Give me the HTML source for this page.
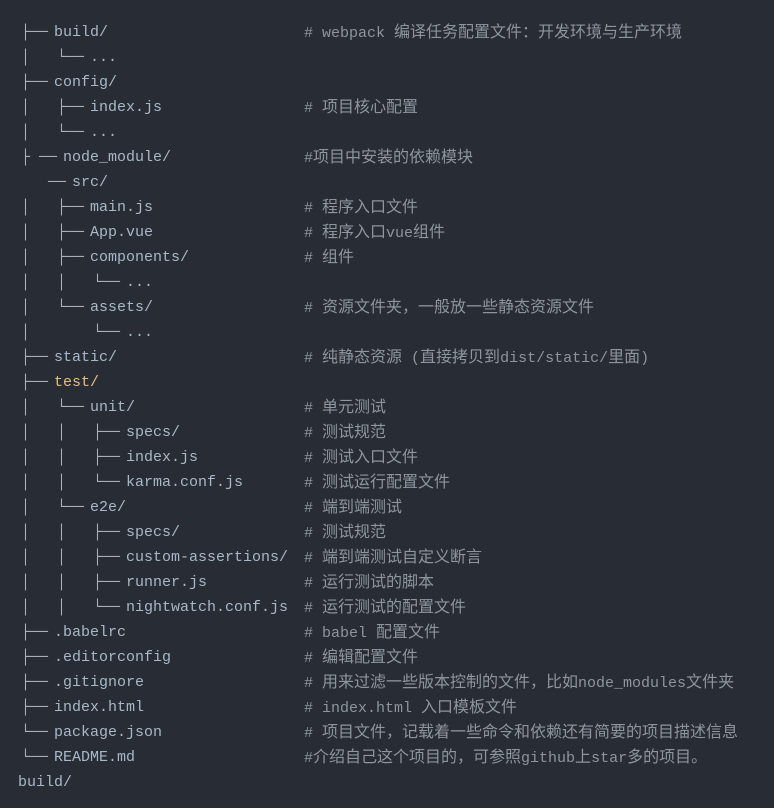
<!DOCTYPE html>
<html><head><meta charset="utf-8"><style>
body{margin:0;width:774px;height:808px;background:#282c34;overflow:hidden;font-family:"Liberation Mono","Noto Sans CJK SC",monospace;font-size:15px;}
.l{position:absolute;white-space:pre;line-height:20px;}
.t{color:#aab1bd;}
.n{color:#a8b8c8;}
.c{color:#8e959f;}
.y{color:#e5c07b;}
.k{font-size:16px;}
</style></head><body>
<div id="w"></div>
<script>
var L=[
["├──",54,"build/","# webpack 编译任务配置文件：开发环境与生产环境"],
["│   └──",90,"...",""],
["├──",54,"config/",""],
["│   ├──",90,"index.js","# 项目核心配置"],
["│   └──",90,"...",""],
["├ ──",63,"node_module/","#项目中安装的依赖模块"],
["   ──",72,"src/",""],
["│   ├──",90,"main.js","# 程序入口文件"],
["│   ├──",90,"App.vue","# 程序入口vue组件"],
["│   ├──",90,"components/","# 组件"],
["│   │   └──",126,"...",""],
["│   └──",90,"assets/","# 资源文件夹，一般放一些静态资源文件"],
["│       └──",126,"...",""],
["├──",54,"static/","# 纯静态资源 (直接拷贝到dist/static/里面)"],
["├──",54,"test/","",1],
["│   └──",90,"unit/","# 单元测试"],
["│   │   ├──",126,"specs/","# 测试规范"],
["│   │   ├──",126,"index.js","# 测试入口文件"],
["│   │   └──",126,"karma.conf.js","# 测试运行配置文件"],
["│   └──",90,"e2e/","# 端到端测试"],
["│   │   ├──",126,"specs/","# 测试规范"],
["│   │   ├──",126,"custom-assertions/","# 端到端测试自定义断言"],
["│   │   ├──",126,"runner.js","# 运行测试的脚本"],
["│   │   └──",126,"nightwatch.conf.js","# 运行测试的配置文件"],
["├──",54,".babelrc","# babel 配置文件"],
["├──",54,".editorconfig","# 编辑配置文件"],
["├──",54,".gitignore","# 用来过滤一些版本控制的文件，比如node_modules文件夹"],
["├──",54,"index.html","# index.html 入口模板文件"],
["└──",54,"package.json","# 项目文件，记载着一些命令和依赖还有简要的项目描述信息"],
["└──",54,"README.md","#介绍自己这个项目的，可参照github上star多的项目。"],
["",18,"build/",""]
];
var h="";
L.forEach(function(r,i){
 var top=23+25*i;
 if(r[0])h+='<div class="l t" style="left:21px;top:'+top+'px">'+r[0]+'</div>';
 h+='<div class="l '+(r[4]?'y':'n')+'" style="left:'+r[1]+'px;top:'+top+'px">'+r[2]+'</div>';
 if(r[3]){var c=r[3].replace(/([\u3000-\u9fff\uff00-\uffef]+)/g,'<span class="k">$1</span>');
 h+='<div class="l c" style="left:304px;top:'+top+'px">'+c+'</div>';}
});
document.getElementById("w").innerHTML=h;
</script>
</body></html>
